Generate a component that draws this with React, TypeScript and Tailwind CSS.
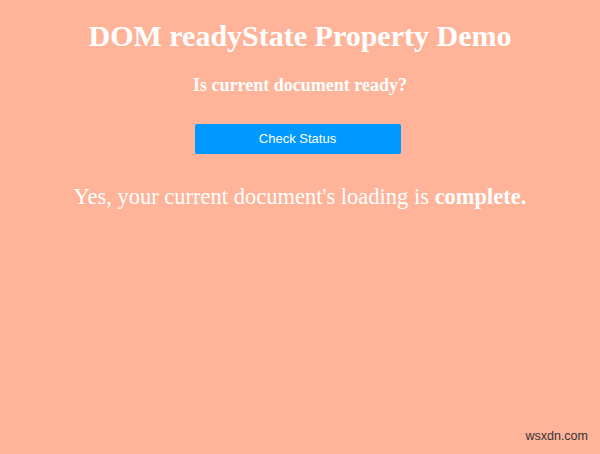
export default function App() {
  return (
    <div className="relative h-[454px] w-[600px] bg-[#ffb399] text-center text-white">
      <div className="flex flex-col items-center font-['Liberation_Serif',serif]">
        <h1 className="mt-[18px] text-[30px] font-bold leading-[36px]">DOM readyState Property Demo</h1>
        <h3 className="mt-[20px] text-[18px] font-bold leading-[22px]">Is current document ready?</h3>
        <button className="mr-[5px] mt-[28px] h-[30px] w-[206px] rounded-[2px] bg-[#0099ff] font-['Liberation_Sans',sans-serif] text-[13px] text-white">
          Check Status
        </button>
        <p className="mt-[29px] text-[22.5px] leading-[28px]">
          Yes, your current document's loading is <b>complete.</b>
        </p>
      </div>
      <span className="absolute bottom-[8px] right-[12px] font-['Liberation_Sans',sans-serif] text-[12.5px] text-[#333]">wsxdn.com</span>
    </div>
  );
}
